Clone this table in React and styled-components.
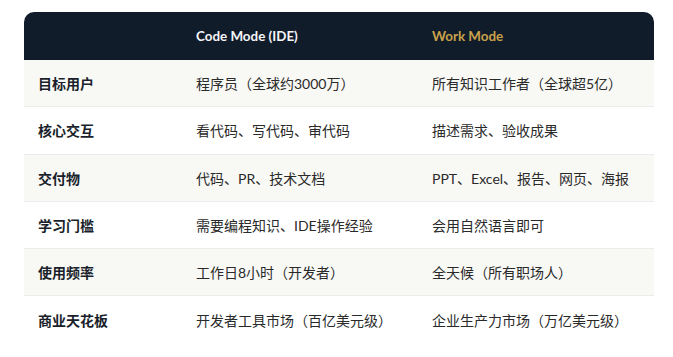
import React from "react";
import styled, { createGlobalStyle } from "styled-components";

const Global = createGlobalStyle`
  html, body { margin: 0; padding: 0; background: #ffffff; }
  body { font-family: "Lato", "Noto Sans CJK SC", sans-serif; }
`;

const Page = styled.div`
  padding: 12px 19px 0 24px;
`;

const Table = styled.table`
  width: 630px;
  border-collapse: separate;
  border-spacing: 0;
  table-layout: fixed;
  font-size: 14px;
  color: #1f2328;
`;

const HeadCell = styled.th`
  background: #111c2b;
  color: ${(p) => (p.$accent ? "#c9a24a" : "#f4f5f7")};
  font-size: 13.4px;
  font-weight: 700;
  text-align: left;
  height: 48px;
  padding: 0 14px;
  box-sizing: border-box;
  &:first-child { border-top-left-radius: 10px; }
  &:last-child { border-top-right-radius: 10px; }
`;

const Row = styled.tr`
  background: ${(p) => (p.$alt ? "#f8f8f5" : "#ffffff")};
`;

const Cell = styled.td`
  height: 47.3px;
  padding: 0 14px;
  box-sizing: border-box;
  border-bottom: ${(p) => (p.$last ? "none" : "1px solid #ececec")};
  font-weight: ${(p) => (p.$label ? 700 : 400)};
  color: ${(p) => (p.$label ? "#1a1f2b" : "#2a2a2a")};
  white-space: nowrap;
`;

const rows = [
  ["目标用户", "程序员（全球约3000万）", "所有知识工作者（全球超5亿）"],
  ["核心交互", "看代码、写代码、审代码", "描述需求、验收成果"],
  ["交付物", "代码、PR、技术文档", "PPT、Excel、报告、网页、海报"],
  ["学习门槛", "需要编程知识、IDE操作经验", "会用自然语言即可"],
  ["使用频率", "工作日8小时（开发者）", "全天候（所有职场人）"],
  ["商业天花板", "开发者工具市场（百亿美元级）", "企业生产力市场（万亿美元级）"],
];

export default function App() {
  return (
    <>
      <Global />
      <Page>
        <Table>
          <colgroup>
            <col style={{ width: "158px" }} />
            <col style={{ width: "236px" }} />
            <col style={{ width: "236px" }} />
          </colgroup>
          <thead>
            <tr>
              <HeadCell></HeadCell>
              <HeadCell>Code Mode (IDE)</HeadCell>
              <HeadCell $accent>Work Mode</HeadCell>
            </tr>
          </thead>
          <tbody>
            {rows.map((r, i) => (
              <Row key={i} $alt={i % 2 === 0}>
                <Cell $label $last={i === rows.length - 1}>{r[0]}</Cell>
                <Cell $last={i === rows.length - 1}>{r[1]}</Cell>
                <Cell $last={i === rows.length - 1}>{r[2]}</Cell>
              </Row>
            ))}
          </tbody>
        </Table>
      </Page>
    </>
  );
}
